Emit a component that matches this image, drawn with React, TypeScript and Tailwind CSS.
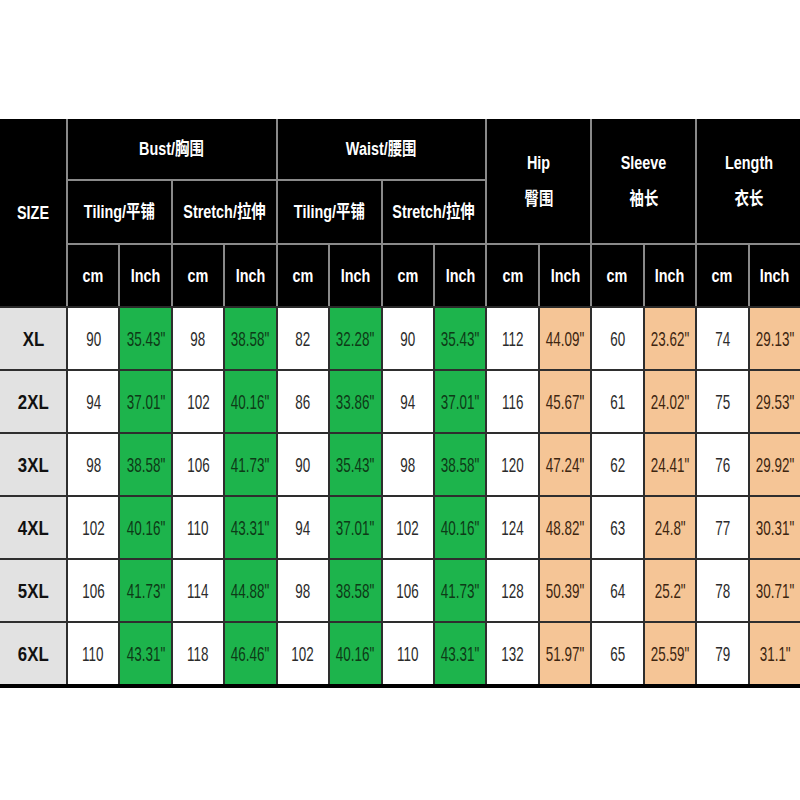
const font = "font-['Liberation_Sans_Narrow','Liberation_Sans','Noto_Sans_CJK_SC',sans-serif]";

const rows: [string, string[]][] = [
  ["XL", ["90", "35.43", "98", "38.58", "82", "32.28", "90", "35.43", "112", "44.09", "60", "23.62", "74", "29.13"]],
  ["2XL", ["94", "37.01", "102", "40.16", "86", "33.86", "94", "37.01", "116", "45.67", "61", "24.02", "75", "29.53"]],
  ["3XL", ["98", "38.58", "106", "41.73", "90", "35.43", "98", "38.58", "120", "47.24", "62", "24.41", "76", "29.92"]],
  ["4XL", ["102", "40.16", "110", "43.31", "94", "37.01", "102", "40.16", "124", "48.82", "63", "24.8", "77", "30.31"]],
  ["5XL", ["106", "41.73", "114", "44.88", "98", "38.58", "106", "41.73", "128", "50.39", "64", "25.2", "78", "30.71"]],
  ["6XL", ["110", "43.31", "118", "46.46", "102", "40.16", "110", "43.31", "132", "51.97", "65", "25.59", "79", "31.1"]],
];

const Squeeze = ({ children }: { children: React.ReactNode }) => (
  <span className="inline-block scale-x-[0.8] whitespace-nowrap">{children}</span>
);

const Head = ({ children, className = "" }: { children: React.ReactNode; className?: string }) => (
  <div className={`flex flex-col items-center justify-center bg-black text-[18px] font-bold leading-[36px] text-white ${className}`}>
    {children}
  </div>
);

export default function App() {
  return (
    <div className={`min-h-[800px] w-[800px] bg-white pt-[119px] ${font}`}>
      <div className="grid grid-cols-[66px_repeat(14,minmax(0,1fr))] grid-rows-[60px_62px_61px] gap-[2px] bg-[#8a8a8a]">
        <Head className="row-span-3"><Squeeze>SIZE</Squeeze></Head>
        <Head className="col-span-4"><Squeeze>Bust/胸围</Squeeze></Head>
        <Head className="col-span-4"><Squeeze>Waist/腰围</Squeeze></Head>
        <Head className="col-span-2 row-span-2"><Squeeze>Hip</Squeeze><Squeeze>臀围</Squeeze></Head>
        <Head className="col-span-2 row-span-2"><Squeeze>Sleeve</Squeeze><Squeeze>袖长</Squeeze></Head>
        <Head className="col-span-2 row-span-2"><Squeeze>Length</Squeeze><Squeeze>衣长</Squeeze></Head>
        <Head className="col-span-2"><Squeeze>Tiling/平铺</Squeeze></Head>
        <Head className="col-span-2"><Squeeze>Stretch/拉伸</Squeeze></Head>
        <Head className="col-span-2"><Squeeze>Tiling/平铺</Squeeze></Head>
        <Head className="col-span-2"><Squeeze>Stretch/拉伸</Squeeze></Head>
        {Array.from({ length: 7 }).map((_, i) => (
          <div key={i} className="contents">
            <Head><Squeeze>cm</Squeeze></Head>
            <Head className={i < 4 ? "bg-[#1db44c]" : "bg-[#f5c596] text-[#fdeee0]"}>
              <Squeeze>Inch</Squeeze>
            </Head>
          </div>
        ))}
      </div>
      <div className="grid grid-cols-[66px_repeat(14,minmax(0,1fr))] auto-rows-[61px] gap-[2px] border-t-2 border-b-4 border-t-[#2a2a2a] border-b-black bg-[#2e2e2e]">
        {rows.map(([size, vals]) => (
          <div key={size} className="contents">
            <div className="flex items-center justify-center bg-[#e2e2e2] text-[21px] font-bold text-[#111]">
              <Squeeze>{size}</Squeeze>
            </div>
            {vals.map((v, i) => {
              const inch = i % 2 === 1;
              const bg = !inch ? "bg-white text-[#2b2b2b]" : i < 8 ? "bg-[#1db44c] text-[#0d3a17]" : "bg-[#f5c596] text-[#3d2510]";
              return (
                <div key={i} className={`flex items-center justify-center overflow-visible text-[21px] ${bg}`}>
                  <span className="inline-block scale-x-[0.64] whitespace-nowrap">
                    {v}
                    {inch ? '"' : ""}
                  </span>
                </div>
              );
            })}
          </div>
        ))}
      </div>
    </div>
  );
}
